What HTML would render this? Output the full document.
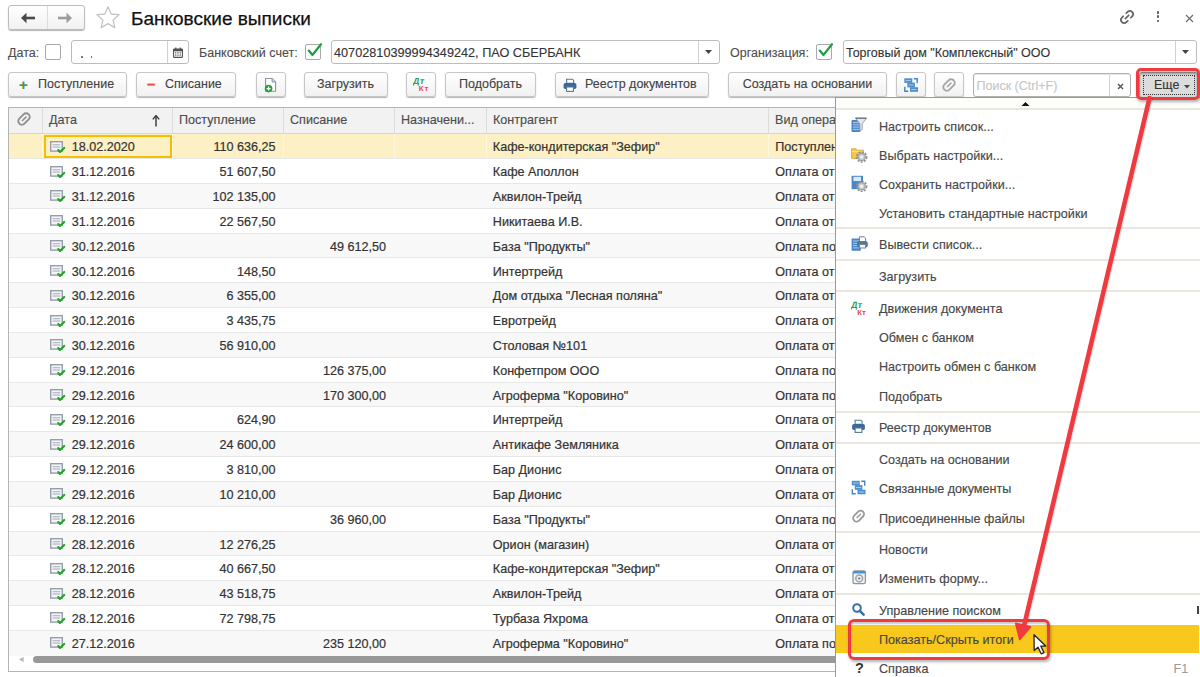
<!DOCTYPE html>
<html><head><meta charset="utf-8">
<style>
*{box-sizing:border-box}
html,body{margin:0;padding:0}
body{width:1200px;height:677px;overflow:hidden;background:#fff;position:relative;font-family:"Liberation Sans",sans-serif;font-size:12.5px;color:#4d4d4d}
.a{position:absolute}
.btn{position:absolute;height:24.5px;border:1px solid #c6c6c6;border-radius:3px;background:linear-gradient(#ffffff,#f1f1f1);box-shadow:0 1px 1px rgba(0,0,0,.3);font-size:12.5px;color:#424242;line-height:23.6px;text-align:center;white-space:nowrap;-webkit-text-stroke:0.12px #424242}
.inp{position:absolute;height:23px;border:1px solid #bcbcbc;border-radius:3px;background:#fff}
.cb{position:absolute;width:16px;height:16px;border:1px solid #aaaaaa;border-radius:2px;background:#fff}
.lbl{position:absolute;font-size:12.5px;color:#4d4d4d;line-height:16px;white-space:nowrap;-webkit-text-stroke:0.12px currentColor}
.tbl{position:absolute;left:8px;top:107px;width:1190px;height:565px;border:1px solid #b4b4b4;background:#fff}
.hdr{position:absolute;left:9px;top:108px;width:1188px;height:26px;background:#f2f2f2;border-bottom:1px solid #d6d6d6}
.hc{position:absolute;top:0;height:25px;border-left:1px solid #dcdcdc;line-height:25px;padding-left:6px;color:#4d4d4d;white-space:nowrap;font-size:12.6px;-webkit-text-stroke:0.15px #4d4d4d}
.r{position:absolute;left:9px;width:1188px;height:24.82px;border-bottom:1px solid #e8e8e8;background:#fff}
.r.alt{background:#f8f8f8}
.r.last{border-bottom:none}
.r.sel{background:#fdf0c4}
.vl{position:absolute;top:0;width:1px;height:100%;background:#fff6dc}
.t{position:absolute;top:1px;line-height:25px;color:#333;font-size:12.6px;white-space:nowrap;-webkit-text-stroke:0.2px #333}
.dt{left:62.75px}
.inc{right:921.5px;text-align:right}
.out{right:811px;text-align:right}
.kon{left:483.8px}
.vid{left:766.3px}
.ic{position:absolute;left:41.4px;top:6.4px;width:16px;height:13px}
.menu{position:absolute;left:835px;top:96.5px;width:380px;height:600px;background:#fff;border:1px solid #9a9a9a}
.msep{position:absolute;left:836px;width:364px;height:2px;background:#e9e7de}
.mt{position:absolute;left:879px;height:16px;line-height:16px;font-size:12.6px;color:#474747;white-space:nowrap;-webkit-text-stroke:0.15px #474747}
.mic{position:absolute;left:851px;width:18px;height:17px}
</style></head><body>

<!-- nav -->
<div class="btn" style="left:8px;top:5px;width:77px;height:25px;border-color:#bdbdbd"></div>
<div class="a" style="left:47px;top:6px;width:1px;height:23px;background:#dcdcdc"></div>
<svg class="a" style="left:20px;top:12px" width="16" height="12" viewBox="0 0 16 12"><path d="M15 6H5" stroke="#4a4a4a" stroke-width="2.6"/><path d="M1 6 L6.5 0.8 V11.2z" fill="#4a4a4a"/></svg>
<svg class="a" style="left:57px;top:12px" width="16" height="12" viewBox="0 0 16 12"><path d="M1 6H11" stroke="#9c9c9c" stroke-width="2.6"/><path d="M15 6 L9.5 0.8 V11.2z" fill="#9c9c9c"/></svg>
<svg class="a" style="left:95px;top:6px" width="26" height="23" viewBox="0 0 26 23"><path d="M13.00 0.70 L16.12 8.01 L24.03 8.72 L18.04 13.94 L19.82 21.68 L13.00 17.60 L6.18 21.68 L7.96 13.94 L1.97 8.72 L9.88 8.01 Z" fill="none" stroke="#c2c6ca" stroke-width="1.3" stroke-linejoin="round"/></svg>
<div class="a" style="left:131px;top:6.5px;font-size:19px;line-height:24px;color:#111;white-space:nowrap;-webkit-text-stroke:0.25px #111">Банковские выписки</div>

<!-- top right icons -->
<svg class="a" style="left:1117px;top:7px" width="20" height="20" viewBox="0 0 20 20"><g transform="rotate(45 10 10)"><path d="M6.8 8.6 V6 a3.2 3.2 0 0 1 6.4 0 V8.6 M6.8 11.4 V14 a3.2 3.2 0 0 0 6.4 0 V11.4 M10 7 V13" fill="none" stroke="#636363" stroke-width="1.7"/></g></svg>
<div class="a" style="left:1156.7px;top:11px;width:2.8px;height:2.8px;background:#555;border-radius:50%"></div>
<div class="a" style="left:1156.7px;top:15.3px;width:2.8px;height:2.8px;background:#555;border-radius:50%"></div>
<div class="a" style="left:1156.7px;top:19.6px;width:2.8px;height:2.8px;background:#555;border-radius:50%"></div>
<svg class="a" style="left:1185px;top:13.5px" width="9" height="9" viewBox="0 0 9 9"><path d="M1 1L8 8M8 1L1 8" stroke="#6e6e6e" stroke-width="1.15"/></svg>

<!-- field row -->
<div class="lbl" style="left:8px;top:45px">Дата:</div>
<div class="cb" style="left:45px;top:44px"></div>
<div class="inp" style="left:71px;top:40px;width:118px;height:23.5px"></div>
<div class="a" style="left:167px;top:41px;width:1px;height:22px;background:#d2d2d2"></div>
<div class="a" style="left:81.2px;top:56px;width:1.6px;height:1.6px;background:#777"></div><div class="a" style="left:90.8px;top:56px;width:1.6px;height:1.6px;background:#777"></div>
<svg class="a" style="left:172.5px;top:46.5px" width="10" height="11" viewBox="0 0 10 11"><rect x="0.6" y="2" width="8.8" height="8.4" rx="0.6" fill="#fff" stroke="#505050" stroke-width="1.1"/><rect x="0.6" y="2" width="8.8" height="2.3" fill="#505050"/><path d="M2.8 0.4v2.4M7.2 0.4v2.4" stroke="#505050" stroke-width="1.2"/><path d="M2 5.9h1.4M4.3 5.9h1.4M6.6 5.9h1.4M2 8.2h1.4M4.3 8.2h1.4M6.6 8.2h1.4" stroke="#6a6a6a" stroke-width="1.3"/></svg>
<div class="lbl" style="left:199px;top:45px">Банковский счет:</div>
<div class="cb" style="left:305px;top:44px"></div>
<svg class="a" style="left:306px;top:40px" width="18" height="18" viewBox="0 0 18 18"><path d="M2.8 10.6 L6.5 14.9 L15 4.3" fill="none" stroke="#1e9e45" stroke-width="2.3" stroke-linecap="round" stroke-linejoin="round"/></svg>
<div class="inp" style="left:331px;top:40px;width:389px;height:23.5px"></div>
<div class="a" style="left:698px;top:41px;width:1px;height:22px;background:#d2d2d2"></div>
<svg class="a" style="left:705px;top:50px" width="7" height="4" viewBox="0 0 7 4"><path d="M0 0H7L3.5 4z" fill="#444"/></svg>
<div class="lbl" style="left:334px;top:45px;color:#333;font-size:12.7px">40702810399994349242, ПАО СБЕРБАНК</div>
<div class="lbl" style="left:730px;top:45px">Организация:</div>
<div class="cb" style="left:816px;top:44px"></div>
<svg class="a" style="left:817px;top:40px" width="18" height="18" viewBox="0 0 18 18"><path d="M2.8 10.6 L6.5 14.9 L15 4.3" fill="none" stroke="#1e9e45" stroke-width="2.3" stroke-linecap="round" stroke-linejoin="round"/></svg>
<div class="inp" style="left:842.5px;top:40px;width:354px;height:23.5px"></div>
<div class="a" style="left:1175px;top:41px;width:1px;height:22px;background:#d2d2d2"></div>
<svg class="a" style="left:1182px;top:50px" width="7" height="4" viewBox="0 0 7 4"><path d="M0 0H7L3.5 4z" fill="#444"/></svg>
<div class="lbl" style="left:846px;top:45px;color:#333">Торговый дом "Комплексный" ООО</div>

<!-- toolbar -->
<div class="btn" style="left:8px;top:72.2px;width:118.5px"><span style="position:absolute;left:10px;top:0;color:#3aa53a;font-weight:bold;font-size:15px">+</span><span style="position:absolute;left:29px">Поступление</span></div>
<div class="btn" style="left:136px;top:72.2px;width:100px"><span style="position:absolute;left:10px;top:-1px;color:#e8503c;font-weight:bold;font-size:15px">&#8211;</span><span style="position:absolute;left:28px">Списание</span></div>
<div class="btn" style="left:255.5px;top:72.2px;width:30px"><svg style="position:absolute;left:7px;top:4px" width="15" height="16" viewBox="0 0 15 16"><path d="M1.6 1.5 H8 L11.6 5 V14.2 H1.6 Z" fill="#fff" stroke="#8a93a0" stroke-width="1.1"/><path d="M8 1.5 V5 H11.6" fill="#c9d3de" stroke="#8a93a0" stroke-width="0.9"/><circle cx="4.6" cy="11.6" r="3.8" fill="#27a03a"/><path d="M4.6 9.6v4M2.6 11.6h4" stroke="#fff" stroke-width="1.3"/></svg></div>
<div class="btn" style="left:303.5px;top:72.2px;width:84px">Загрузить</div>
<div class="btn" style="left:406px;top:72.2px;width:30px"><svg style="position:absolute;left:6px;top:3px" width="18" height="17" viewBox="0 0 18 17"><text x="1" y="8.2" font-family="Liberation Sans" font-size="8.8" font-weight="bold" fill="#2e9e4c" transform="skewX(-8)" letter-spacing="0.4">Дт</text><text x="5.8" y="15.2" font-family="Liberation Sans" font-size="7.8" font-weight="bold" fill="#e2494c" letter-spacing="0.9">Кт</text></svg></div>
<div class="btn" style="left:445px;top:72.2px;width:91px">Подобрать</div>
<div class="btn" style="left:555px;top:72.2px;width:154px"><svg style="position:absolute;left:6.5px;top:4.5px" width="15" height="15" viewBox="0 0 15 15"><path d="M3.6 1.2 H9.4 L10.6 2.4 V5.2 H3.6 Z" fill="#fff" stroke="#5b7895" stroke-width="1.1"/><rect x="0.6" y="5" width="12.8" height="6" rx="1.8" fill="#3c6a98"/><rect x="3.6" y="9" width="6.8" height="4.4" fill="#fff" stroke="#5b7895" stroke-width="1.1"/></svg><span style="position:absolute;left:29px">Реестр документов</span></div>
<div class="btn" style="left:728px;top:72.2px;width:159px">Создать на основании</div>
<div class="btn" style="left:896.3px;top:72.2px;width:29.5px"><svg style="position:absolute;left:7px;top:5px" width="15" height="15" viewBox="0 0 15 15"><path d="M9.8 0.8 H13.2 V5.3 M0.8 8.7 V13.2 H4.2" fill="none" stroke="#3f86c6" stroke-width="1.4"/><rect x="0.3" y="0.3" width="8" height="4.6" fill="#4f8fca"/><rect x="3.3" y="4.6" width="7.6" height="4.8" fill="#4f8fca"/><rect x="6" y="9.2" width="8" height="4.6" fill="#4f8fca"/><path d="M1.6 2.6 H7 M4.6 7 H9.6 M7.3 11.5 H12.6" stroke="#a9cbea" stroke-width="1"/></svg></div>
<div class="btn" style="left:934.3px;top:72.2px;width:29.5px"><svg style="position:absolute;left:6px;top:3.5px" width="16" height="16" viewBox="0 0 16 16"><g transform="rotate(45 8 8)"><rect x="4.4" y="1.4" width="7.2" height="13.2" rx="3.6" fill="none" stroke="#a6a6a6" stroke-width="1.9"/><path d="M8 4.6 V10.8" stroke="#a6a6a6" stroke-width="1.5"/></g></svg></div>
<div class="inp" style="left:973px;top:72.5px;width:158px;height:24px;border-color:#b0b0b0;box-shadow:inset 0 1px 1px rgba(0,0,0,.1)"></div>
<div class="a" style="left:1109px;top:73px;width:1px;height:23px;background:#d2d2d2"></div>
<div class="lbl" style="left:976.5px;top:78px;color:#c6c6c6">Поиск (Ctrl+F)</div>
<svg class="a" style="left:1116.5px;top:82.5px" width="7" height="7" viewBox="0 0 7 7"><path d="M1 1L6 6M6 1L1 6" stroke="#555" stroke-width="1.4"/></svg>
<div class="btn" style="left:1139px;top:71.5px;width:59px;height:26px;background:#dcdcdc;border-color:#9a9a9a;box-shadow:inset 0 1px 2px rgba(0,0,0,.25)"></div>
<div class="a" style="left:1143px;top:75px;width:52px;height:19.5px;border:1px dotted #333"></div>
<div class="lbl" style="left:1154px;top:77px;color:#333">Еще</div>
<svg class="a" style="left:1184px;top:85px" width="6" height="3.5" viewBox="0 0 6 3.5"><path d="M0 0H6L3 3.5z" fill="#444"/></svg>

<!-- table -->
<div class="tbl"></div>
<div class="hdr">
<div class="hc" style="left:0;width:33px;border-left:none"><svg style="position:absolute;left:6.5px;top:3px" width="16" height="16" viewBox="0 0 16 16"><g transform="rotate(45 8 8)"><rect x="4.4" y="1.4" width="7.2" height="13.2" rx="3.6" fill="none" stroke="#8f8f8f" stroke-width="1.9"/><path d="M8 4.6 V10.8" stroke="#8f8f8f" stroke-width="1.5"/></g></svg></div>
<div class="hc" style="left:33px;width:130px">Дата<svg style="position:absolute;left:109px;top:7px" width="8" height="12" viewBox="0 0 8 12"><path d="M4 11.5V2" stroke="#333" stroke-width="1.4"/><path d="M0.8 4.4 L4 0.6 L7.2 4.4" fill="none" stroke="#333" stroke-width="1.4"/></svg></div>
<div class="hc" style="left:163px;width:111px">Поступление</div>
<div class="hc" style="left:274px;width:111px">Списание</div>
<div class="hc" style="left:385px;width:92px">Назначени...</div>
<div class="hc" style="left:477px;width:282px">Контрагент</div>
<div class="hc" style="left:759px;width:300px">Вид операции</div>
</div>
<div class="r sel" style="top:134.40px"><div class="vl" style="left:33px"></div><div class="vl" style="left:163px"></div><div class="vl" style="left:274px"></div><div class="vl" style="left:385px"></div><div class="vl" style="left:477px"></div><div class="vl" style="left:759px"></div><div class="ic"><svg width="16" height="13" viewBox="0 0 16 13"><rect x="0.7" y="0.7" width="11.6" height="9.4" fill="#f3f5f7" stroke="#959eab" stroke-width="1.4"/><rect x="2.6" y="3" width="7.6" height="1.3" fill="#b8bdc5"/><rect x="2.6" y="5.4" width="7.6" height="1.3" fill="#b8bdc5"/><path d="M8.2 9 L10 11 L14.2 6.9" fill="none" stroke="#22a424" stroke-width="2.1" stroke-linecap="round" stroke-linejoin="round"/></svg></div><span class="t dt">18.02.2020</span><span class="t inc">110 636,25</span><span class="t out"></span><span class="t kon">Кафе-кондитерская "Зефир"</span><span class="t vid">Поступлен</span></div>
<div class="r" style="top:159.22px"><div class="ic"><svg width="16" height="13" viewBox="0 0 16 13"><rect x="0.7" y="0.7" width="11.6" height="9.4" fill="#f3f5f7" stroke="#959eab" stroke-width="1.4"/><rect x="2.6" y="3" width="7.6" height="1.3" fill="#b8bdc5"/><rect x="2.6" y="5.4" width="7.6" height="1.3" fill="#b8bdc5"/><path d="M8.2 9 L10 11 L14.2 6.9" fill="none" stroke="#22a424" stroke-width="2.1" stroke-linecap="round" stroke-linejoin="round"/></svg></div><span class="t dt">31.12.2016</span><span class="t inc">51 607,50</span><span class="t out"></span><span class="t kon">Кафе Аполлон</span><span class="t vid">Оплата от</span></div>
<div class="r alt" style="top:184.04px"><div class="ic"><svg width="16" height="13" viewBox="0 0 16 13"><rect x="0.7" y="0.7" width="11.6" height="9.4" fill="#f3f5f7" stroke="#959eab" stroke-width="1.4"/><rect x="2.6" y="3" width="7.6" height="1.3" fill="#b8bdc5"/><rect x="2.6" y="5.4" width="7.6" height="1.3" fill="#b8bdc5"/><path d="M8.2 9 L10 11 L14.2 6.9" fill="none" stroke="#22a424" stroke-width="2.1" stroke-linecap="round" stroke-linejoin="round"/></svg></div><span class="t dt">31.12.2016</span><span class="t inc">102 135,00</span><span class="t out"></span><span class="t kon">Аквилон-Трейд</span><span class="t vid">Оплата от</span></div>
<div class="r" style="top:208.86px"><div class="ic"><svg width="16" height="13" viewBox="0 0 16 13"><rect x="0.7" y="0.7" width="11.6" height="9.4" fill="#f3f5f7" stroke="#959eab" stroke-width="1.4"/><rect x="2.6" y="3" width="7.6" height="1.3" fill="#b8bdc5"/><rect x="2.6" y="5.4" width="7.6" height="1.3" fill="#b8bdc5"/><path d="M8.2 9 L10 11 L14.2 6.9" fill="none" stroke="#22a424" stroke-width="2.1" stroke-linecap="round" stroke-linejoin="round"/></svg></div><span class="t dt">31.12.2016</span><span class="t inc">22 567,50</span><span class="t out"></span><span class="t kon">Никитаева И.В.</span><span class="t vid">Оплата от</span></div>
<div class="r alt" style="top:233.68px"><div class="ic"><svg width="16" height="13" viewBox="0 0 16 13"><rect x="0.7" y="0.7" width="11.6" height="9.4" fill="#f3f5f7" stroke="#959eab" stroke-width="1.4"/><rect x="2.6" y="3" width="7.6" height="1.3" fill="#b8bdc5"/><rect x="2.6" y="5.4" width="7.6" height="1.3" fill="#b8bdc5"/><path d="M8.2 9 L10 11 L14.2 6.9" fill="none" stroke="#22a424" stroke-width="2.1" stroke-linecap="round" stroke-linejoin="round"/></svg></div><span class="t dt">30.12.2016</span><span class="t inc"></span><span class="t out">49 612,50</span><span class="t kon">База "Продукты"</span><span class="t vid">Оплата по</span></div>
<div class="r" style="top:258.50px"><div class="ic"><svg width="16" height="13" viewBox="0 0 16 13"><rect x="0.7" y="0.7" width="11.6" height="9.4" fill="#f3f5f7" stroke="#959eab" stroke-width="1.4"/><rect x="2.6" y="3" width="7.6" height="1.3" fill="#b8bdc5"/><rect x="2.6" y="5.4" width="7.6" height="1.3" fill="#b8bdc5"/><path d="M8.2 9 L10 11 L14.2 6.9" fill="none" stroke="#22a424" stroke-width="2.1" stroke-linecap="round" stroke-linejoin="round"/></svg></div><span class="t dt">30.12.2016</span><span class="t inc">148,50</span><span class="t out"></span><span class="t kon">Интертрейд</span><span class="t vid">Оплата от</span></div>
<div class="r alt" style="top:283.32px"><div class="ic"><svg width="16" height="13" viewBox="0 0 16 13"><rect x="0.7" y="0.7" width="11.6" height="9.4" fill="#f3f5f7" stroke="#959eab" stroke-width="1.4"/><rect x="2.6" y="3" width="7.6" height="1.3" fill="#b8bdc5"/><rect x="2.6" y="5.4" width="7.6" height="1.3" fill="#b8bdc5"/><path d="M8.2 9 L10 11 L14.2 6.9" fill="none" stroke="#22a424" stroke-width="2.1" stroke-linecap="round" stroke-linejoin="round"/></svg></div><span class="t dt">30.12.2016</span><span class="t inc">6 355,00</span><span class="t out"></span><span class="t kon">Дом отдыха "Лесная поляна"</span><span class="t vid">Оплата от</span></div>
<div class="r" style="top:308.14px"><div class="ic"><svg width="16" height="13" viewBox="0 0 16 13"><rect x="0.7" y="0.7" width="11.6" height="9.4" fill="#f3f5f7" stroke="#959eab" stroke-width="1.4"/><rect x="2.6" y="3" width="7.6" height="1.3" fill="#b8bdc5"/><rect x="2.6" y="5.4" width="7.6" height="1.3" fill="#b8bdc5"/><path d="M8.2 9 L10 11 L14.2 6.9" fill="none" stroke="#22a424" stroke-width="2.1" stroke-linecap="round" stroke-linejoin="round"/></svg></div><span class="t dt">30.12.2016</span><span class="t inc">3 435,75</span><span class="t out"></span><span class="t kon">Евротрейд</span><span class="t vid">Оплата от</span></div>
<div class="r alt" style="top:332.96px"><div class="ic"><svg width="16" height="13" viewBox="0 0 16 13"><rect x="0.7" y="0.7" width="11.6" height="9.4" fill="#f3f5f7" stroke="#959eab" stroke-width="1.4"/><rect x="2.6" y="3" width="7.6" height="1.3" fill="#b8bdc5"/><rect x="2.6" y="5.4" width="7.6" height="1.3" fill="#b8bdc5"/><path d="M8.2 9 L10 11 L14.2 6.9" fill="none" stroke="#22a424" stroke-width="2.1" stroke-linecap="round" stroke-linejoin="round"/></svg></div><span class="t dt">30.12.2016</span><span class="t inc">56 910,00</span><span class="t out"></span><span class="t kon">Столовая №101</span><span class="t vid">Оплата от</span></div>
<div class="r" style="top:357.78px"><div class="ic"><svg width="16" height="13" viewBox="0 0 16 13"><rect x="0.7" y="0.7" width="11.6" height="9.4" fill="#f3f5f7" stroke="#959eab" stroke-width="1.4"/><rect x="2.6" y="3" width="7.6" height="1.3" fill="#b8bdc5"/><rect x="2.6" y="5.4" width="7.6" height="1.3" fill="#b8bdc5"/><path d="M8.2 9 L10 11 L14.2 6.9" fill="none" stroke="#22a424" stroke-width="2.1" stroke-linecap="round" stroke-linejoin="round"/></svg></div><span class="t dt">29.12.2016</span><span class="t inc"></span><span class="t out">126 375,00</span><span class="t kon">Конфетпром ООО</span><span class="t vid">Оплата по</span></div>
<div class="r alt" style="top:382.60px"><div class="ic"><svg width="16" height="13" viewBox="0 0 16 13"><rect x="0.7" y="0.7" width="11.6" height="9.4" fill="#f3f5f7" stroke="#959eab" stroke-width="1.4"/><rect x="2.6" y="3" width="7.6" height="1.3" fill="#b8bdc5"/><rect x="2.6" y="5.4" width="7.6" height="1.3" fill="#b8bdc5"/><path d="M8.2 9 L10 11 L14.2 6.9" fill="none" stroke="#22a424" stroke-width="2.1" stroke-linecap="round" stroke-linejoin="round"/></svg></div><span class="t dt">29.12.2016</span><span class="t inc"></span><span class="t out">170 300,00</span><span class="t kon">Агроферма "Коровино"</span><span class="t vid">Оплата по</span></div>
<div class="r" style="top:407.42px"><div class="ic"><svg width="16" height="13" viewBox="0 0 16 13"><rect x="0.7" y="0.7" width="11.6" height="9.4" fill="#f3f5f7" stroke="#959eab" stroke-width="1.4"/><rect x="2.6" y="3" width="7.6" height="1.3" fill="#b8bdc5"/><rect x="2.6" y="5.4" width="7.6" height="1.3" fill="#b8bdc5"/><path d="M8.2 9 L10 11 L14.2 6.9" fill="none" stroke="#22a424" stroke-width="2.1" stroke-linecap="round" stroke-linejoin="round"/></svg></div><span class="t dt">29.12.2016</span><span class="t inc">624,90</span><span class="t out"></span><span class="t kon">Интертрейд</span><span class="t vid">Оплата от</span></div>
<div class="r alt" style="top:432.24px"><div class="ic"><svg width="16" height="13" viewBox="0 0 16 13"><rect x="0.7" y="0.7" width="11.6" height="9.4" fill="#f3f5f7" stroke="#959eab" stroke-width="1.4"/><rect x="2.6" y="3" width="7.6" height="1.3" fill="#b8bdc5"/><rect x="2.6" y="5.4" width="7.6" height="1.3" fill="#b8bdc5"/><path d="M8.2 9 L10 11 L14.2 6.9" fill="none" stroke="#22a424" stroke-width="2.1" stroke-linecap="round" stroke-linejoin="round"/></svg></div><span class="t dt">29.12.2016</span><span class="t inc">24 600,00</span><span class="t out"></span><span class="t kon">Антикафе Земляника</span><span class="t vid">Оплата от</span></div>
<div class="r" style="top:457.06px"><div class="ic"><svg width="16" height="13" viewBox="0 0 16 13"><rect x="0.7" y="0.7" width="11.6" height="9.4" fill="#f3f5f7" stroke="#959eab" stroke-width="1.4"/><rect x="2.6" y="3" width="7.6" height="1.3" fill="#b8bdc5"/><rect x="2.6" y="5.4" width="7.6" height="1.3" fill="#b8bdc5"/><path d="M8.2 9 L10 11 L14.2 6.9" fill="none" stroke="#22a424" stroke-width="2.1" stroke-linecap="round" stroke-linejoin="round"/></svg></div><span class="t dt">29.12.2016</span><span class="t inc">3 810,00</span><span class="t out"></span><span class="t kon">Бар Дионис</span><span class="t vid">Оплата от</span></div>
<div class="r alt" style="top:481.88px"><div class="ic"><svg width="16" height="13" viewBox="0 0 16 13"><rect x="0.7" y="0.7" width="11.6" height="9.4" fill="#f3f5f7" stroke="#959eab" stroke-width="1.4"/><rect x="2.6" y="3" width="7.6" height="1.3" fill="#b8bdc5"/><rect x="2.6" y="5.4" width="7.6" height="1.3" fill="#b8bdc5"/><path d="M8.2 9 L10 11 L14.2 6.9" fill="none" stroke="#22a424" stroke-width="2.1" stroke-linecap="round" stroke-linejoin="round"/></svg></div><span class="t dt">29.12.2016</span><span class="t inc">10 210,00</span><span class="t out"></span><span class="t kon">Бар Дионис</span><span class="t vid">Оплата от</span></div>
<div class="r" style="top:506.70px"><div class="ic"><svg width="16" height="13" viewBox="0 0 16 13"><rect x="0.7" y="0.7" width="11.6" height="9.4" fill="#f3f5f7" stroke="#959eab" stroke-width="1.4"/><rect x="2.6" y="3" width="7.6" height="1.3" fill="#b8bdc5"/><rect x="2.6" y="5.4" width="7.6" height="1.3" fill="#b8bdc5"/><path d="M8.2 9 L10 11 L14.2 6.9" fill="none" stroke="#22a424" stroke-width="2.1" stroke-linecap="round" stroke-linejoin="round"/></svg></div><span class="t dt">28.12.2016</span><span class="t inc"></span><span class="t out">36 960,00</span><span class="t kon">База "Продукты"</span><span class="t vid">Оплата по</span></div>
<div class="r alt" style="top:531.52px"><div class="ic"><svg width="16" height="13" viewBox="0 0 16 13"><rect x="0.7" y="0.7" width="11.6" height="9.4" fill="#f3f5f7" stroke="#959eab" stroke-width="1.4"/><rect x="2.6" y="3" width="7.6" height="1.3" fill="#b8bdc5"/><rect x="2.6" y="5.4" width="7.6" height="1.3" fill="#b8bdc5"/><path d="M8.2 9 L10 11 L14.2 6.9" fill="none" stroke="#22a424" stroke-width="2.1" stroke-linecap="round" stroke-linejoin="round"/></svg></div><span class="t dt">28.12.2016</span><span class="t inc">12 276,25</span><span class="t out"></span><span class="t kon">Орион (магазин)</span><span class="t vid">Оплата от</span></div>
<div class="r" style="top:556.34px"><div class="ic"><svg width="16" height="13" viewBox="0 0 16 13"><rect x="0.7" y="0.7" width="11.6" height="9.4" fill="#f3f5f7" stroke="#959eab" stroke-width="1.4"/><rect x="2.6" y="3" width="7.6" height="1.3" fill="#b8bdc5"/><rect x="2.6" y="5.4" width="7.6" height="1.3" fill="#b8bdc5"/><path d="M8.2 9 L10 11 L14.2 6.9" fill="none" stroke="#22a424" stroke-width="2.1" stroke-linecap="round" stroke-linejoin="round"/></svg></div><span class="t dt">28.12.2016</span><span class="t inc">40 667,50</span><span class="t out"></span><span class="t kon">Кафе-кондитерская "Зефир"</span><span class="t vid">Оплата от</span></div>
<div class="r alt" style="top:581.16px"><div class="ic"><svg width="16" height="13" viewBox="0 0 16 13"><rect x="0.7" y="0.7" width="11.6" height="9.4" fill="#f3f5f7" stroke="#959eab" stroke-width="1.4"/><rect x="2.6" y="3" width="7.6" height="1.3" fill="#b8bdc5"/><rect x="2.6" y="5.4" width="7.6" height="1.3" fill="#b8bdc5"/><path d="M8.2 9 L10 11 L14.2 6.9" fill="none" stroke="#22a424" stroke-width="2.1" stroke-linecap="round" stroke-linejoin="round"/></svg></div><span class="t dt">28.12.2016</span><span class="t inc">43 518,75</span><span class="t out"></span><span class="t kon">Аквилон-Трейд</span><span class="t vid">Оплата от</span></div>
<div class="r" style="top:605.98px"><div class="ic"><svg width="16" height="13" viewBox="0 0 16 13"><rect x="0.7" y="0.7" width="11.6" height="9.4" fill="#f3f5f7" stroke="#959eab" stroke-width="1.4"/><rect x="2.6" y="3" width="7.6" height="1.3" fill="#b8bdc5"/><rect x="2.6" y="5.4" width="7.6" height="1.3" fill="#b8bdc5"/><path d="M8.2 9 L10 11 L14.2 6.9" fill="none" stroke="#22a424" stroke-width="2.1" stroke-linecap="round" stroke-linejoin="round"/></svg></div><span class="t dt">28.12.2016</span><span class="t inc">72 798,75</span><span class="t out"></span><span class="t kon">Турбаза Яхрома</span><span class="t vid">Оплата от</span></div>
<div class="r alt last" style="top:630.80px"><div class="ic"><svg width="16" height="13" viewBox="0 0 16 13"><rect x="0.7" y="0.7" width="11.6" height="9.4" fill="#f3f5f7" stroke="#959eab" stroke-width="1.4"/><rect x="2.6" y="3" width="7.6" height="1.3" fill="#b8bdc5"/><rect x="2.6" y="5.4" width="7.6" height="1.3" fill="#b8bdc5"/><path d="M8.2 9 L10 11 L14.2 6.9" fill="none" stroke="#22a424" stroke-width="2.1" stroke-linecap="round" stroke-linejoin="round"/></svg></div><span class="t dt">27.12.2016</span><span class="t inc"></span><span class="t out">235 120,00</span><span class="t kon">Агроферма "Коровино"</span><span class="t vid">Оплата по</span></div>
<div class="a" style="left:43.5px;top:135px;width:128px;height:22.5px;border:2px solid #f4bf00"></div>
<svg class="a" style="left:19px;top:657px" width="5" height="5" viewBox="0 0 5 5"><path d="M4.6 0V5L0 2.5z" fill="#b5b5b5"/></svg>
<div class="a" style="left:33px;top:655.5px;width:1200px;height:7.5px;border-radius:4px;background:#999"></div>

<!-- menu -->
<div class="menu"></div>
<div class="a" style="left:836px;top:97.5px;width:364px;height:10px;background:#fdfdfa"></div>
<svg class="a" style="left:1021px;top:101.5px" width="9" height="4.5" viewBox="0 0 9 4.5"><path d="M0 4.5H9L4.5 0z" fill="#111"/></svg>
<div class="a" style="left:836px;top:625.3px;width:362.5px;height:27.7px;background:#f8c81c"></div>
<div class="msep" style="top:107.5px"></div>
<div class="msep" style="top:227.4px"></div>
<div class="msep" style="top:258.8px"></div>
<div class="msep" style="top:290.3px"></div>
<div class="msep" style="top:410.5px"></div>
<div class="msep" style="top:441.7px"></div>
<div class="msep" style="top:530.6px"></div>
<div class="msep" style="top:592.5px"></div>
<div class="mt" style="top:118.6px">Настроить список...</div>
<div class="mic" style="top:116.5px;left:851px"><svg width="18" height="17" viewBox="0 0 18 17"><rect x="0.5" y="3" width="9" height="12" rx="1" fill="#4a87c8"/><path d="M2 5.5h6M2 7.8h6M2 10.1h6M2 12.4h6" stroke="#b8d2ee" stroke-width="0.9"/><path d="M4.5 1.2 H15.5 L11.2 6.8 V12.5 L8.8 13.8 V6.8 Z" fill="#e3e6ea" stroke="#8c97a3" stroke-width="0.9" stroke-linejoin="round"/><path d="M4.5 1.2 H15.5" stroke="#6e7a86" stroke-width="1.4"/></svg></div>
<div class="mt" style="top:147.6px">Выбрать настройки...</div>
<div class="mic" style="top:145.5px;left:851px"><svg width="18" height="17" viewBox="0 0 18 17"><path d="M0.6 2.8 H5 L6.3 4.2 H12.4 V12.4 H0.6 Z" fill="#f6c64c" stroke="#dba633" stroke-width="0.9"/><path d="M0.6 5.4 H12.4" stroke="#fbe39a" stroke-width="1"/><circle cx="10.6" cy="11" r="5.0" fill="none" stroke="#8a8f95" stroke-width="1.6" stroke-dasharray="2 1.3"/><circle cx="10.6" cy="11" r="4.3" fill="#9ba0a6"/><circle cx="10.6" cy="11" r="3" fill="#c9cdd1"/><circle cx="10.6" cy="11" r="1.5" fill="#f2f3f4"/></svg></div>
<div class="mt" style="top:176.6px">Сохранить настройки...</div>
<div class="mic" style="top:174.5px;left:851px"><svg width="18" height="17" viewBox="0 0 18 17"><path d="M0.6 0.8 H12 V14.2 H0.6 Z" fill="#4a87c8"/><rect x="2.4" y="1.8" width="7.6" height="4.2" fill="#dde9f6"/><circle cx="10.6" cy="11.3" r="5.0" fill="none" stroke="#8a8f95" stroke-width="1.6" stroke-dasharray="2 1.3"/><circle cx="10.6" cy="11.3" r="4.3" fill="#9ba0a6"/><circle cx="10.6" cy="11.3" r="3" fill="#c9cdd1"/><circle cx="10.6" cy="11.3" r="1.5" fill="#f2f3f4"/></svg></div>
<div class="mt" style="top:205.6px">Установить стандартные настройки</div>
<div class="mt" style="top:237.4px">Вывести список...</div>
<div class="mic" style="top:236.3px;left:851px"><svg width="18" height="17" viewBox="0 0 18 17"><rect x="0.6" y="2.4" width="9.2" height="12.4" rx="0.6" fill="#4a87c8"/><path d="M2 5h6M2 7.3h6M2 9.6h6M2 11.9h6" stroke="#a9c8ea" stroke-width="1"/><path d="M8.4 0.8 H13.2 L14.6 2.2 V5.6 H8.4 Z" fill="#fff" stroke="#6e8194" stroke-width="1"/><rect x="6" y="5.2" width="10.8" height="6.2" rx="1.8" fill="#557593"/><rect x="8.4" y="8.4" width="6.2" height="3.6" fill="#eef2f6" stroke="#6e8194" stroke-width="0.9"/></svg></div>
<div class="mt" style="top:268.6px">Загрузить</div>
<div class="mt" style="top:300.6px">Движения документа</div>
<div class="mic" style="top:298.0px;left:851px"><svg width="18" height="19" viewBox="0 0 18 19"><text x="1.2" y="9.6" font-family="Liberation Sans" font-size="9" font-weight="bold" fill="#2e9e4c" transform="skewX(-8)">Дт</text><text x="6.3" y="17" font-family="Liberation Sans" font-size="7.8" font-weight="bold" fill="#e2494c">Кт</text></svg></div>
<div class="mt" style="top:330.1px">Обмен с банком</div>
<div class="mt" style="top:359.4px">Настроить обмен с банком</div>
<div class="mt" style="top:388.6px">Подобрать</div>
<div class="mt" style="top:420.4px">Реестр документов</div>
<div class="mic" style="top:417.8px;left:851px"><svg width="18" height="17" viewBox="0 0 18 17"><g transform="translate(0.5 1)"><path d="M3.6 1.2 H9.4 L10.6 2.4 V5.2 H3.6 Z" fill="#fff" stroke="#5b7895" stroke-width="1.1"/><rect x="0.6" y="5" width="12.8" height="6" rx="1.8" fill="#3c6a98"/><rect x="3.6" y="9" width="6.8" height="4.4" fill="#fff" stroke="#5b7895" stroke-width="1.1"/></g></svg></div>
<div class="mt" style="top:451.8px">Создать на основании</div>
<div class="mt" style="top:481.4px">Связанные документы</div>
<div class="mic" style="top:480.3px;left:851px"><svg width="18" height="17" viewBox="0 0 18 17"><g transform="translate(0.5 0.5)"><path d="M9.8 0.8 H13.2 V5.3 M0.8 8.7 V13.2 H4.2" fill="none" stroke="#3f86c6" stroke-width="1.4"/><rect x="0.3" y="0.3" width="8" height="4.6" fill="#4f8fca"/><rect x="3.3" y="4.6" width="7.6" height="4.8" fill="#4f8fca"/><rect x="6" y="9.2" width="8" height="4.6" fill="#4f8fca"/><path d="M1.6 2.6 H7 M4.6 7 H9.6 M7.3 11.5 H12.6" stroke="#a9cbea" stroke-width="1"/></g></svg></div>
<div class="mt" style="top:510.5px">Присоединенные файлы</div>
<div class="mic" style="top:508.4px;left:851px"><svg width="18" height="17" viewBox="0 0 18 17"><g transform="translate(0 0.5) scale(0.95)"><g transform="rotate(45 8 8)"><rect x="4.4" y="1.4" width="7.2" height="13.2" rx="3.6" fill="none" stroke="#9a9a9a" stroke-width="1.9"/><path d="M8 4.6 V10.8" stroke="#9a9a9a" stroke-width="1.5"/></g></g></svg></div>
<div class="mt" style="top:541.6px">Новости</div>
<div class="mt" style="top:570.9px">Изменить форму...</div>
<div class="mic" style="top:570.3px;left:851px"><svg width="18" height="17" viewBox="0 0 18 17"><rect x="2" y="1" width="12.4" height="12.6" rx="1.6" fill="#f2f4f6" stroke="#8f959c" stroke-width="1.3"/><path d="M2 3.6 V2.6 a1.6 1.6 0 0 1 1.6 -1.6 H12.8 a1.6 1.6 0 0 1 1.6 1.6 V3.6 Z" fill="#3f95e0"/><circle cx="8.2" cy="8.4" r="3.4" fill="none" stroke="#9ea4ab" stroke-width="1.6"/><circle cx="8.2" cy="8.4" r="1.2" fill="#7d848b"/></svg></div>
<div class="mt" style="top:602.6px">Управление поиском</div>
<div class="mic" style="top:602.0px;left:851px"><svg width="18" height="17" viewBox="0 0 18 17"><circle cx="6" cy="6" r="3.8" fill="none" stroke="#3a70a8" stroke-width="2"/><path d="M8.8 8.8 L12.6 12.6" stroke="#3a70a8" stroke-width="2.6" stroke-linecap="round"/></svg></div>
<div class="mt" style="top:632.1px">Показать/Скрыть итоги</div>
<div class="mt" style="top:660.7px">Справка</div>
<div class="mic" style="top:659.6px;left:853px"><div style="font-weight:bold;font-size:14.5px;line-height:16px;color:#333;margin-left:2px">?</div></div>
<div class="a" style="left:1173.5px;top:661.5px;font-size:12.6px;color:#999">F1</div>
<div class="a" style="left:1197.3px;top:606px;width:1.3px;height:8px;background:#444"></div>

<!-- annotations -->
<div class="a" style="left:848px;top:619px;width:202px;height:40.6px;border:3.2px solid #ef3a40;border-radius:6px;box-shadow:inset 0 2px 2px rgba(0,0,0,.22),1px 2px 3px rgba(0,0,0,.3)"></div>
<svg class="a" style="left:1032px;top:633px" width="18" height="24" viewBox="0 0 18 24"><path d="M2 1.8 L2.2 17.6 L6 14.2 L9.2 20.8 L12 19.6 L8.9 13.2 L13.8 13 Z" fill="#fff" stroke="#222" stroke-width="1.3" stroke-linejoin="round"/></svg>
<div class="a" style="left:1136px;top:67.7px;width:64px;height:32.5px;border:3.2px solid #ef3a40;border-radius:5px;box-shadow:inset 0 2px 2px rgba(0,0,0,.2),1px 2px 3px rgba(0,0,0,.3)"></div>
<svg class="a" style="left:0;top:0" width="1200" height="677" viewBox="0 0 1200 677"><path d="M1150.5 99 L1025 626" stroke="rgba(0,0,0,.12)" stroke-width="5" stroke-linecap="round"/><path d="M1149.5 98 L1024 626" stroke="#ef3a40" stroke-width="4.6" stroke-linecap="round"/><path d="M1019.7 639.4 L1015.8 623.5 L1030.4 626.8 Z" fill="#ef3a40" stroke="#ef3a40" stroke-width="1.8" stroke-linejoin="round"/></svg>
</body></html>
